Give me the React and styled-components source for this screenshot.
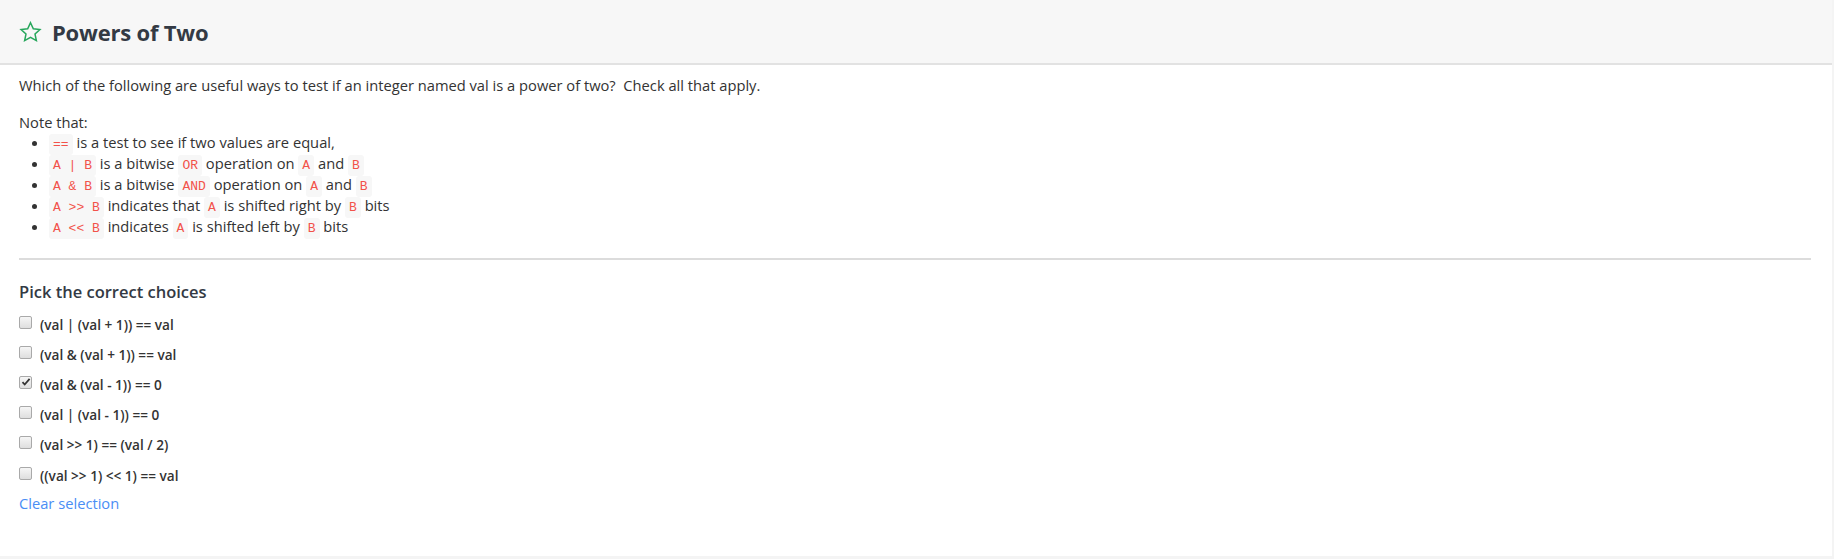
import React from "react";
import styled, { createGlobalStyle } from "styled-components";

const Global = createGlobalStyle`
  html, body { margin: 0; padding: 0; background: #f4f4f4; }
  body { font-family: "Open Sans", "Noto Sans", sans-serif; color: #333; }
`;

const Card = styled.div`
  width: 1832px;
  height: 556px;
  background: #fff;
  box-sizing: border-box;
  display: flex;
  flex-direction: column;
`;

const Header = styled.div`
  height: 65px;
  box-sizing: border-box;
  background: #f7f7f7;
  border-bottom: 2px solid #e2e2e2;
  display: flex;
  align-items: center;
  gap: 10px;
  padding: 0 0 0 19px;
`;

const Title = styled.h1`
  margin: 0;
  font-size: 22px;
  font-weight: 700;
  color: #333a44;
  letter-spacing: -0.2px;
`;

const Body = styled.div`
  padding: 10px 19px 0 19px;
  display: flex;
  flex-direction: column;
`;

const Para = styled.p`
  margin: 0;
  font-size: 14.7px;
  line-height: 20px;
  color: #333;
`;

const List = styled.ul`
  margin: 0;
  padding-left: 30px;
  font-size: 14.7px;
  line-height: 21px;
  color: #333;
  li { margin: 0; height: 21px; }
`;

const Code = styled.code`
  font-family: "Liberation Mono", "DejaVu Sans Mono", monospace;
  font-size: 13px;
  line-height: 1;
  color: #f2524a;
  background: #f7f7f7;
  padding: 3px 4px;
  border-radius: 3px;
`;

const Rule = styled.hr`
  border: 0;
  border-top: 2px solid #dcdcdc;
  margin: 21px 19px 0 0;
  width: calc(100% - 2px);
`;

const Sub = styled.h2`
  margin: 20px 0 10px;
  font-size: 16.5px;
  line-height: 24px;
  font-weight: 600;
  color: #333a44;
`;

const Choices = styled.div`
  display: flex;
  flex-direction: column;
  gap: 10px;
`;

const Row = styled.label`
  display: flex;
  align-items: center;
  gap: 8px;
  height: 20.2px;
  font-size: 13.6px;
  font-weight: 600;
  color: #333;
`;

const Box = styled.span`
  width: 11px;
  height: 11px;
  border: 1px solid #a9a9a9;
  border-radius: 2px;
  background: linear-gradient(#f6f6f6, #dedede);
  display: inline-flex;
  align-items: center;
  justify-content: center;
  margin-top: -4px;
  flex: none;
`;

const Clear = styled.a`
  margin-top: 8px;
  font-size: 14.7px;
  line-height: 20px;
  color: #4a8ef5;
  text-decoration: none;
`;

const Star = () => (
  <svg width="23" height="22" viewBox="0 0 24 23" fill="none">
    <path
      d="M12 1.8l2.95 6.3 6.9.8-5.12 4.72 1.38 6.82L12 17l-6.11 3.44 1.38-6.82L2.15 8.9l6.9-.8z"
      stroke="#26a65b"
      strokeWidth="1.6"
      strokeLinejoin="miter"
    />
  </svg>
);

const Check = () => (
  <svg width="10" height="10" viewBox="0 0 10 10">
    <path d="M1.5 5.2l2.2 2.3L8.6 1.8" stroke="#333" strokeWidth="1.8" fill="none" />
  </svg>
);

const choices = [
  ["(val | (val + 1)) == val", false],
  ["(val & (val + 1)) == val", false],
  ["(val & (val - 1)) == 0", true],
  ["(val | (val - 1)) == 0", false],
  ["(val >> 1) == (val / 2)", false],
  ["((val >> 1) << 1) == val", false],
];

export default function App() {
  return (
    <>
      <Global />
      <Card>
        <Header>
          <Star />
          <Title>Powers of Two</Title>
        </Header>
        <Body>
          <Para>
            Which of the following are useful ways to test if an integer named val is a power of two?&nbsp; Check all that apply.
          </Para>
          <Para style={{ marginTop: 17 }}>Note that:</Para>
          <List>
            <li><Code>==</Code> is a test to see if two values are equal,</li>
            <li><Code>A | B</Code> is a bitwise <Code>OR</Code> operation on <Code>A</Code> and <Code>B</Code></li>
            <li><Code>A &amp; B</Code> is a bitwise <Code>AND</Code> operation on <Code>A</Code> and <Code>B</Code></li>
            <li><Code>A &gt;&gt; B</Code> indicates that <Code>A</Code> is shifted right by <Code>B</Code> bits</li>
            <li><Code>A &lt;&lt; B</Code> indicates <Code>A</Code> is shifted left by <Code>B</Code> bits</li>
          </List>
          <Rule />
          <Sub>Pick the correct choices</Sub>
          <Choices>
            {choices.map(([t, c]) => (
              <Row key={t}>
                <Box>{c && <Check />}</Box>
                <span>{t}</span>
              </Row>
            ))}
          </Choices>
          <Clear href="#">Clear selection</Clear>
        </Body>
      </Card>
    </>
  );
}
